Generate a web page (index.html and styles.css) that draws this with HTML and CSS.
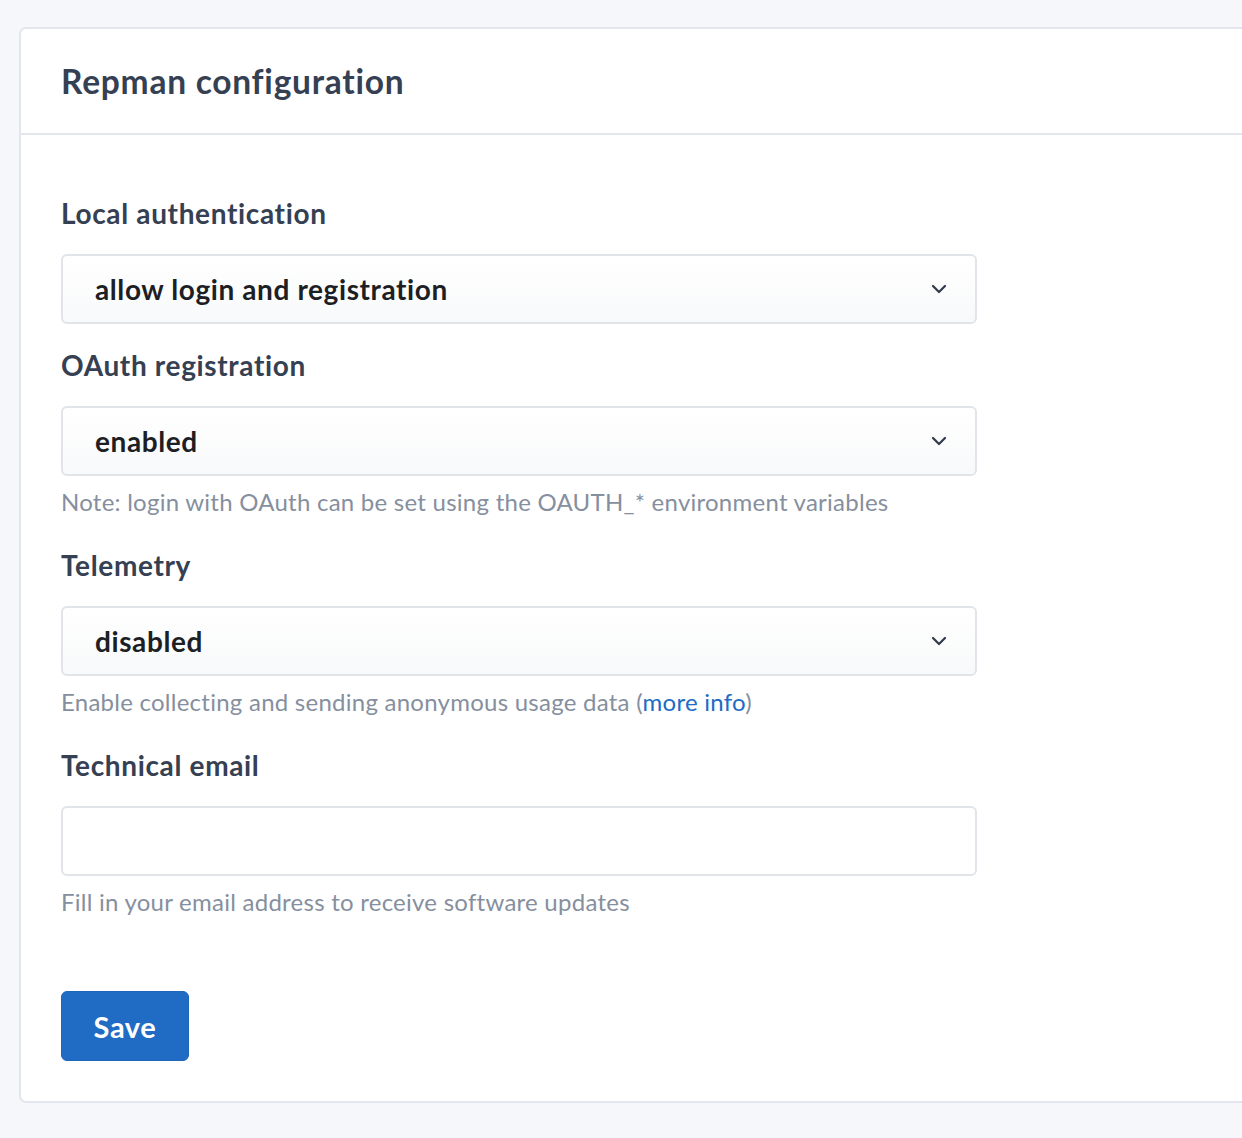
FILE: index.html
```html
<!DOCTYPE html>
<html>
<head>
<meta charset="utf-8">
<link rel="stylesheet" href="styles.css">
</head>
<body>
<div class="page">
  <div class="card">
    <div class="card-header">
      <h3 class="card-title">Repman configuration</h3>
    </div>
    <form class="card-body">
      <div class="field">
        <label class="label">Local authentication</label>
        <div class="select">
          <span class="select-value">allow login and registration</span>
          <svg class="chevron" viewBox="0 0 16 10" width="16" height="10"><path d="M2 2l6 6 6-6" fill="none" stroke="currentColor" stroke-width="2.2" stroke-linecap="round" stroke-linejoin="round"/></svg>
        </div>
      </div>
      <div class="field">
        <label class="label">OAuth registration</label>
        <div class="select">
          <span class="select-value">enabled</span>
          <svg class="chevron" viewBox="0 0 16 10" width="16" height="10"><path d="M2 2l6 6 6-6" fill="none" stroke="currentColor" stroke-width="2.2" stroke-linecap="round" stroke-linejoin="round"/></svg>
        </div>
        <div class="help">Note: login with OAuth can be set using the OAUTH_* environment variables</div>
      </div>
      <div class="field">
        <label class="label">Telemetry</label>
        <div class="select">
          <span class="select-value">disabled</span>
          <svg class="chevron" viewBox="0 0 16 10" width="16" height="10"><path d="M2 2l6 6 6-6" fill="none" stroke="currentColor" stroke-width="2.2" stroke-linecap="round" stroke-linejoin="round"/></svg>
        </div>
        <div class="help">Enable collecting and sending anonymous usage data (<a class="link" href="#">more info</a>)</div>
      </div>
      <div class="field">
        <label class="label">Technical email</label>
        <div class="input"></div>
        <div class="help">Fill in your email address to receive software updates</div>
      </div>
      <div class="actions">
        <button type="button" class="btn">Save</button>
      </div>
    </form>
  </div>
</div>
</body>
</html>
```
FILE: styles.css
```css
html, body {
  margin: 0;
  padding: 0;
  background: #f5f7fb;
  overflow: hidden;
}
body {
  font-family: "Lato", "Noto Sans", sans-serif;
  font-variant-ligatures: none;
  color: #354052;
}
.page {
  padding: 27px 0 0 19px;
  height: 1138px;
  box-sizing: border-box;
}
.card {
  width: 1300px;
  background: #fff;
  border: 2px solid #e3e6ec;
  border-radius: 7px;
  box-sizing: border-box;
}
.card-header {
  height: 104px;
  border-bottom: 2px solid #e3e6ec;
  display: flex;
  align-items: center;
  padding-left: 40px;
}
.card-title {
  margin: 0;
  font-size: 33.5px;
  font-weight: 700;
  color: #354052;
  letter-spacing: 0.75px;
}
.card-body {
  padding: 58px 0 40px 40px;
  width: 916px;
  display: flex;
  flex-direction: column;
}
.field {
  display: flex;
  flex-direction: column;
  margin-bottom: 21px;
}
.label {
  font-size: 28px;
  line-height: 40px;
  font-weight: 700;
  color: #354052;
  letter-spacing: 0.65px;
  margin-bottom: 21px;
}
.select, .input {
  height: 70px;
  box-sizing: border-box;
  border: 2px solid #e1e4e9;
  border-radius: 6px;
  background: linear-gradient(#ffffff, #f8f9fa);
  display: flex;
  align-items: center;
  padding: 0 28px 0 32px;
}
.input {
  background: #fff;
}
.select-value {
  flex: 1;
  font-size: 28px;
  font-weight: 700;
  color: #1d1f24;
  letter-spacing: 0.6px;
}
.chevron {
  color: #2f3a4c;
}
.help {
  font-size: 24px;
  line-height: 36px;
  color: #868f9e;
  letter-spacing: 0.25px;
  margin-top: 8px;
  margin-bottom: 4px;
}
.link {
  color: #206bc4;
  text-decoration: none;
}
.actions {
  margin-top: 46px;
}
.btn {
  width: 128px;
  height: 70px;
  background: #206bc4;
  border: 1px solid #1f66bb;
  border-radius: 6px;
  color: #fff;
  font-family: inherit;
  font-size: 29px;
  font-weight: 700;
  letter-spacing: 0.6px;
  padding: 0;
}
```
